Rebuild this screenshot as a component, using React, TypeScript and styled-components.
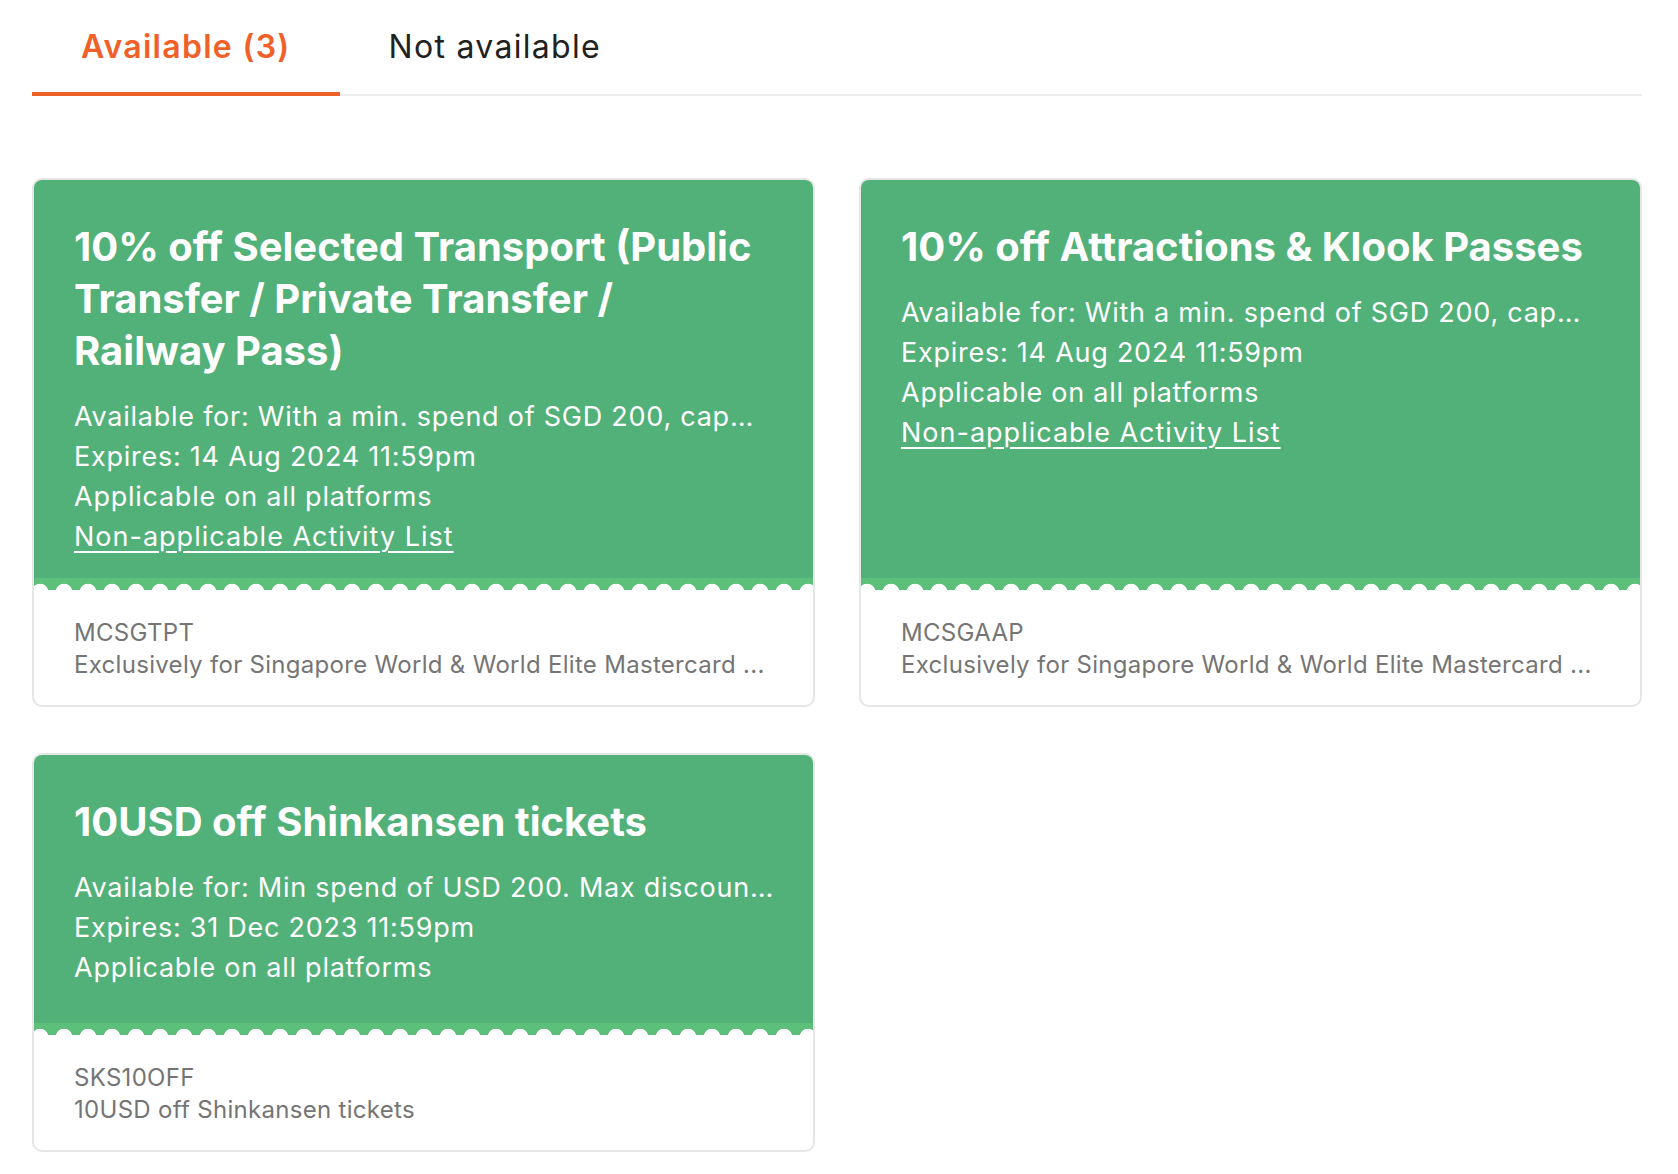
import styled, { createGlobalStyle } from 'styled-components';

type Coupon = {
  title: string;
  lines: string[];
  link?: string;
  code: string;
  note: string;
};

const coupons: Coupon[] = [
  {
    title: '10% off Selected Transport (Public Transfer / Private Transfer / Railway Pass)',
    lines: [
      'Available for: With a min. spend of SGD 200, cap…',
      'Expires: 14 Aug 2024 11:59pm',
      'Applicable on all platforms',
    ],
    link: 'Non-applicable Activity List',
    code: 'MCSGTPT',
    note: 'Exclusively for Singapore World & World Elite Mastercard ...',
  },
  {
    title: '10% off Attractions & Klook Passes',
    lines: [
      'Available for: With a min. spend of SGD 200, cap…',
      'Expires: 14 Aug 2024 11:59pm',
      'Applicable on all platforms',
    ],
    link: 'Non-applicable Activity List',
    code: 'MCSGAAP',
    note: 'Exclusively for Singapore World & World Elite Mastercard ...',
  },
  {
    title: '10USD off Shinkansen tickets',
    lines: [
      'Available for: Min spend of USD 200. Max discoun…',
      'Expires: 31 Dec 2023 11:59pm',
      'Applicable on all platforms',
    ],
    code: 'SKS10OFF',
    note: '10USD off Shinkansen tickets',
  },
];

function App() {
  return (
    <>
      <GlobalStyle />
      <Page>
        <TabBar>
          <Tab active>Available (3)</Tab>
          <Tab>Not available</Tab>
        </TabBar>

        <Grid>
          {coupons.map((c) => (
            <Card key={c.code}>
              <Head>
                <Title>{c.title}</Title>
                {c.lines.map((line) => (
                  <Line key={line}>{line}</Line>
                ))}
                {c.link && <LinkLine href="#">{c.link}</LinkLine>}
              </Head>
              <Scallop />
              <Foot>
                <FootLine>{c.code}</FootLine>
                <FootLine>{c.note}</FootLine>
              </Foot>
            </Card>
          ))}
        </Grid>
      </Page>
    </>
  );
}

export default App;

const GlobalStyle = createGlobalStyle`
  body {
    margin: 0;
    background: #fff;
    font-family: Inter, 'Open Sans', 'Noto Sans', sans-serif;
  }
  * {
    box-sizing: border-box;
  }
`;

const Page = styled.div`
  width: 1610px;
  margin-left: 32px;
  padding-bottom: 20px;
`;

const TabBar = styled.div`
  display: flex;
  border-bottom: 2px solid #eeeeee;
`;

const Tab = styled.div<{ active?: boolean }>`
  display: flex;
  align-items: center;
  height: 96px;
  margin-bottom: -2px;
  padding: 0 49px;
  border-bottom: 4px solid ${({ active }) => (active ? '#f0612a' : 'transparent')};
  font-size: 32px;
  letter-spacing: 1.3px;
  font-weight: ${({ active }) => (active ? 600 : 400)};
  color: ${({ active }) => (active ? '#f0612a' : '#212121')};
`;

const Grid = styled.div`
  display: grid;
  grid-template-columns: 1fr 1fr;
  column-gap: 44px;
  row-gap: 46px;
  margin-top: 82px;
`;

const Card = styled.div`
  display: flex;
  flex-direction: column;
  border: 2px solid #e6e6e6;
  border-radius: 10px;
  overflow: hidden;
  background: #fff;
`;

const Head = styled.div`
  flex: 1;
  min-height: 268px;
  padding: 41px 40px 21px;
  background: #52b079;
  color: #fff;
`;

const Title = styled.h3`
  margin: 0 0 20px;
  font-size: 40px;
  line-height: 52px;
  font-weight: 700;
`;

const Line = styled.div`
  font-size: 27px;
  line-height: 40px;
  letter-spacing: 0.75px;
  white-space: nowrap;
  overflow: hidden;
`;

const LinkLine = styled.a`
  display: block;
  font-size: 27px;
  line-height: 40px;
  letter-spacing: 1px;
  color: #fff;
  text-decoration: underline;
  text-underline-offset: 5px;
  text-decoration-thickness: 2px;
`;

const Scallop = styled.div`
  height: 12px;
  background-color: #5cc07a;
  background-image: radial-gradient(circle at 12px 14px, #fff 8px, transparent 8.6px);
  background-size: 24px 12px;
  background-position: -6px 0;
  background-repeat: repeat-x;
`;

const Foot = styled.div`
  padding: 27px 40px 24px;
`;

const FootLine = styled.div`
  font-size: 24px;
  line-height: 32px;
  letter-spacing: 0.3px;
  color: #757575;
  white-space: nowrap;
  overflow: hidden;
`;
